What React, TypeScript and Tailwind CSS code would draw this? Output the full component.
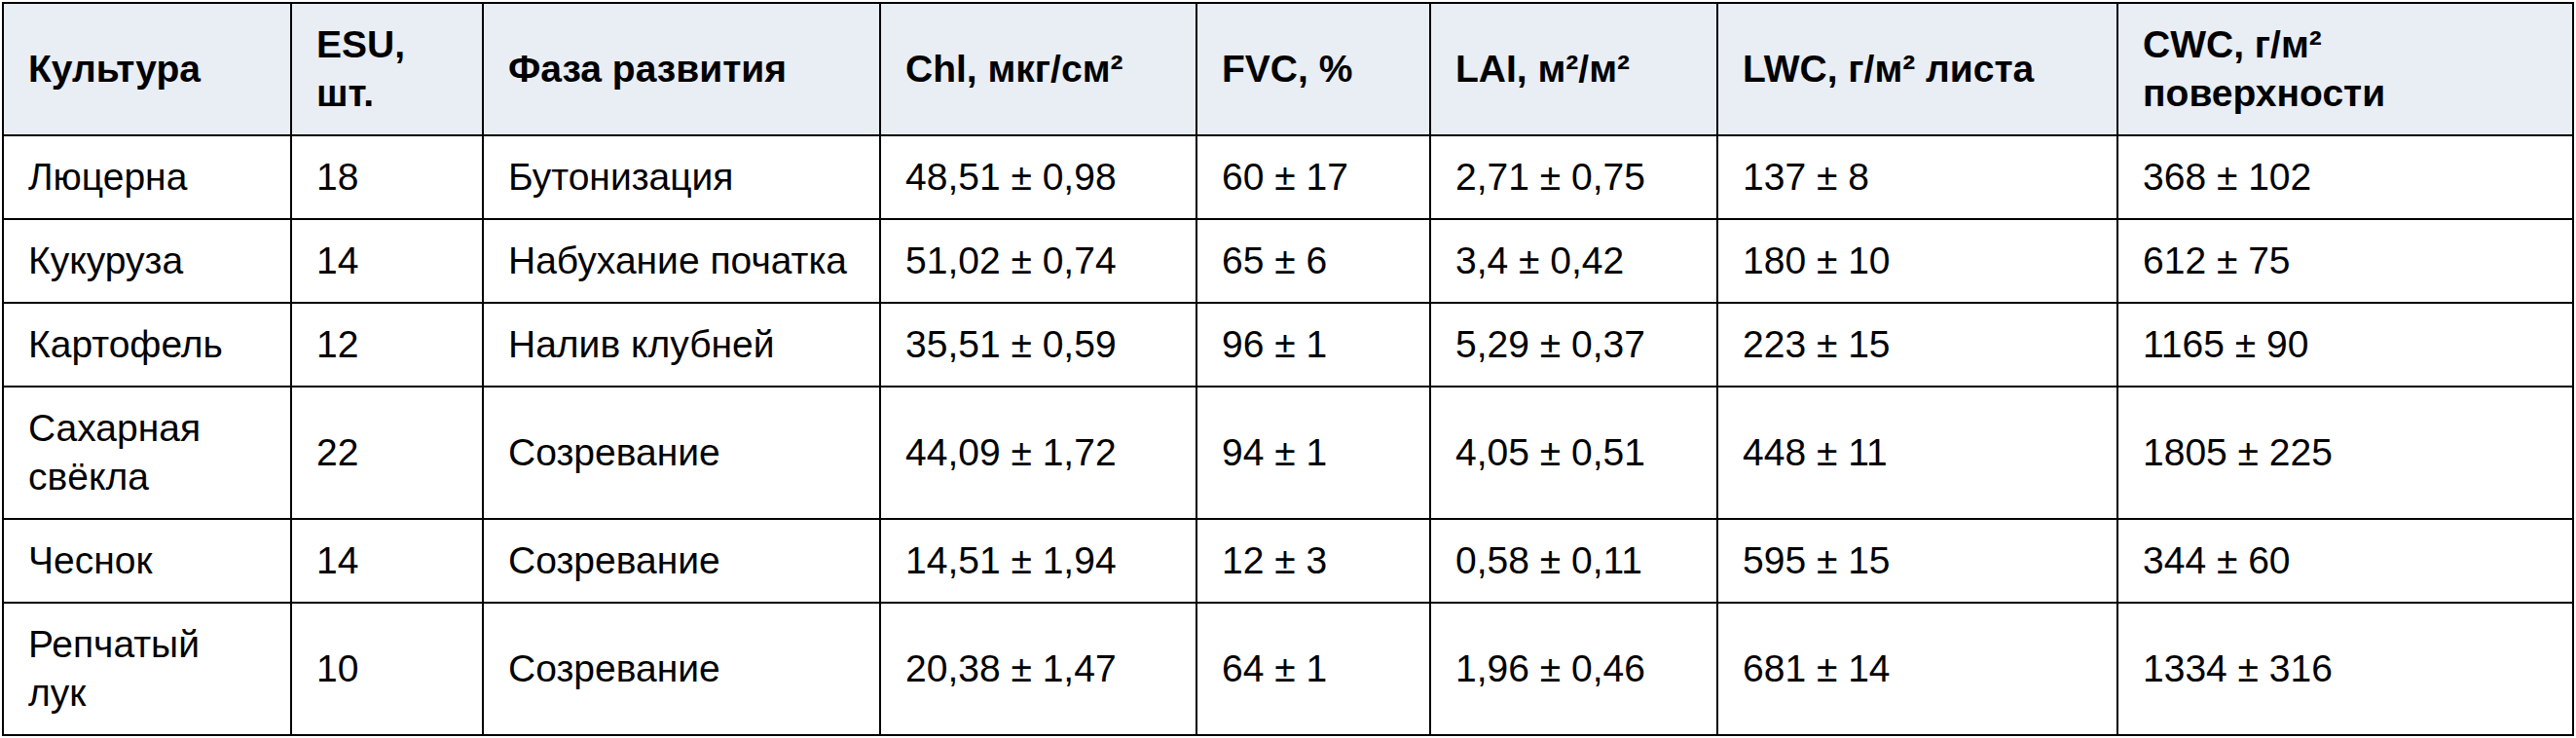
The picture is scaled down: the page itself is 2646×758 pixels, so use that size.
const headers: React.ReactNode[] = [
  "Культура",
  <>ESU,<br />шт.</>,
  "Фаза развития",
  "Chl, мкг/см²",
  "FVC, %",
  "LAI, м²/м²",
  "LWC, г/м² листа",
  <>CWC, г/м²<br />поверхности</>,
];

const rows: React.ReactNode[][] = [
  ["Люцерна", "18", "Бутонизация", "48,51 ± 0,98", "60 ± 17", "2,71 ± 0,75", "137 ± 8", "368 ± 102"],
  ["Кукуруза", "14", "Набухание початка", "51,02 ± 0,74", "65 ± 6", "3,4 ± 0,42", "180 ± 10", "612 ± 75"],
  ["Картофель", "12", "Налив клубней", "35,51 ± 0,59", "96 ± 1", "5,29 ± 0,37", "223 ± 15", "1165 ± 90"],
  [<>Сахарная<br />свёкла</>, "22", "Созревание", "44,09 ± 1,72", "94 ± 1", "4,05 ± 0,51", "448 ± 11", "1805 ± 225"],
  ["Чеснок", "14", "Созревание", "14,51 ± 1,94", "12 ± 3", "0,58 ± 0,11", "595 ± 15", "344 ± 60"],
  [<>Репчатый<br />лук</>, "10", "Созревание", "20,38 ± 1,47", "64 ± 1", "1,96 ± 0,46", "681 ± 14", "1334 ± 316"],
];

const widths = ["w-[296px]", "w-[197px]", "w-[408px]", "w-[325px]", "w-[240px]", "w-[295px]", "w-[411px]", "w-[468px]"];

export default function App() {
  return (
    <div className="w-[2646px] h-[758px] bg-white p-[2px] font-['Liberation_Sans',Arial,sans-serif] text-black">
      <table className="w-[2642px] table-fixed border-collapse text-[39px] leading-[50px]">
        <colgroup>
          {widths.map((w, i) => (
            <col key={i} className={w} />
          ))}
        </colgroup>
        <thead>
          <tr className="bg-[#e9edf4]">
            {headers.map((h, i) => (
              <th
                key={i}
                className="border-2 border-black pl-[25px] pr-2 py-[17px] text-left align-middle font-bold whitespace-nowrap"
              >
                {h}
              </th>
            ))}
          </tr>
        </thead>
        <tbody>
          {rows.map((row, r) => (
            <tr key={r}>
              {row.map((c, i) => (
                <td
                  key={i}
                  className="border-2 border-black pl-[25px] pr-2 py-[17px] align-middle whitespace-nowrap"
                >
                  {c}
                </td>
              ))}
            </tr>
          ))}
        </tbody>
      </table>
    </div>
  );
}
